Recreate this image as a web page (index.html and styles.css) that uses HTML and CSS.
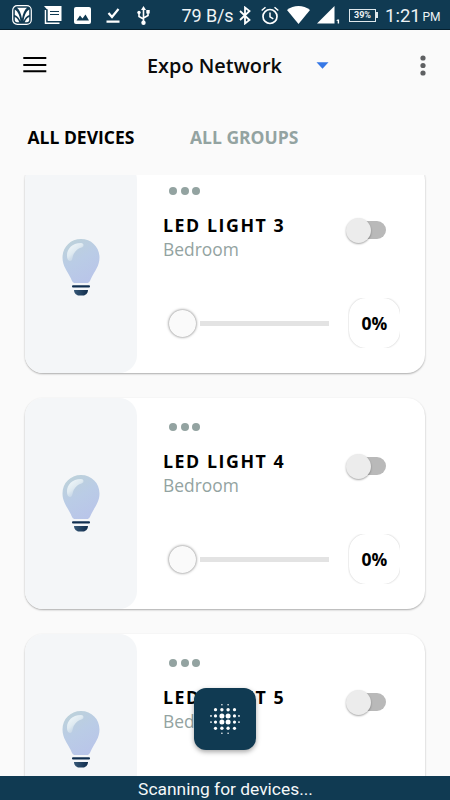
FILE: index.html
```html
<!DOCTYPE html>
<html lang="en">
<head>
<meta charset="utf-8">
<title>Expo Network</title>
<link rel="stylesheet" href="styles.css">
</head>
<body>
<svg class="defs" width="0" height="0">
  <defs>
    <linearGradient id="glass" x1="0.15" y1="0" x2="0.65" y2="1">
      <stop offset="0" stop-color="#bdd2d9"/><stop offset="0.5" stop-color="#bacce6"/><stop offset="1" stop-color="#b9c5e9"/>
    </linearGradient>
    <linearGradient id="shine" x1="0" y1="0" x2="0.8" y2="1">
      <stop offset="0" stop-color="#f4fafb"/><stop offset="0.5" stop-color="#dfeaf1"/><stop offset="1" stop-color="#bed0e3" stop-opacity="0.2"/>
    </linearGradient>
    <linearGradient id="base" x1="0" y1="0" x2="1" y2="0">
      <stop offset="0" stop-color="#375877"/><stop offset="1" stop-color="#102d4d"/>
    </linearGradient>
    <symbol id="bulb" viewBox="0 0 38 57">
      <path fill="url(#glass)" d="M19 0C8.300 0 .5 8.200.5 18.500c0 8.500 4.800 13.500 8.200 20.500 1.300 2.800 1.800 5 4.300 5h12c2.500 0 3-2.200 4.300-5 3.400-7 8.200-12 8.200-20.500C37.500 8.200 29.700 0 19 0Z"/>
      <path fill="url(#shine)" d="M19 4C10 4 5 10 5 16.500c0 3 1 5.500 3 5.500 3 0 2-4 4-7.500C14 11 16.500 9.500 19.500 8.500 22.500 7.500 22 4 19 4Z"/>
      <rect x="10" y="46.300" width="18" height="2.200" rx="1" fill="#102f50"/>
      <path fill="url(#base)" d="M12 51h14c0 3-2.300 5.500-5 5.500h-4c-2.700 0-5-2.500-5-5.500Z"/>
    </symbol>
  </defs>
</svg>
<div class="screen">
  <div class="statusbar">
    <svg class="ic-app" width="20" height="20" viewBox="0 0 20 20"><rect x=".7" y=".7" width="18.600" height="18.600" rx="4.500" fill="none" stroke="#fff" stroke-width="1.200"/><g fill="#fff"><path d="M5 2.700h10c-2.500 2-4 5.500-5 11-1-5.500-2.500-9-5-11Z"/><path d="M2.800 4.500c3.200 2 5 6 5.700 11.500-1.500-3-3-5-5.700-6ZM17.200 4.500c-3.200 2-5 6-5.700 11.500 1.500-3 3-5 5.700-6Z"/><path d="M2.800 12c2 .8 3.500 2.700 4.500 5.200H5c-1.400 0-2.200-.9-2.200-2.200ZM17.200 12c-2 .8-3.500 2.700-4.500 5.200H15c1.400 0 2.200-.9 2.200-2.200Z"/></g></svg>
    <svg class="ic-doc" width="18" height="18" viewBox="0 0 18 18"><path fill="#fff" d="M0 0h17.500v15H3.500V4Z"/><path d="M1.500 4v13.200h14" fill="none" stroke="#fff" stroke-width="1.500"/><path d="M3 3v12.500h12" fill="none" stroke="#103a52" stroke-width=".8"/><path d="M6 5.500h9M6 8.500h9" stroke="#103a52" stroke-width="1"/></svg>
    <svg class="ic-image" width="17" height="17" viewBox="0 0 17 17"><rect width="17" height="17" rx="2" fill="#fff"/><path fill="#103a52" d="m2.500 13.500 3.500-5 2.500 3 3-4 3.500 6Z"/></svg>
    <svg class="ic-check" width="14" height="15" viewBox="0 0 14 15"><path d="m2.500 5 3.500 4L12.500 1M.5 13.700h13" fill="none" stroke="#fff" stroke-width="2.200"/></svg>
    <svg class="ic-usb" width="13" height="19" viewBox="0 0 13 19"><path d="M6.500 3v14M6.500 13 2 10.500V6.500M6.500 12 11 9.500V6" fill="none" stroke="#fff" stroke-width="1.600"/><path fill="#fff" d="m6.500 0 2.500 4H4ZM9.300 4h3.400v3.400H9.300Z"/><circle cx="2" cy="6.500" r="1.700" fill="#fff"/><circle cx="6.500" cy="16.700" r="2.200" fill="#fff"/></svg>
    <span class="speed">79 B/s</span>
    <svg class="ic-bt" width="12" height="19" viewBox="0 0 12 19"><path d="m1 5 9.500 9L6 17.500v-16L10.500 5 1 14" fill="none" stroke="#fff" stroke-width="1.800"/></svg>
    <svg class="ic-alarm" width="18" height="19" viewBox="0 0 18 19"><circle cx="9" cy="10.500" r="7" fill="none" stroke="#fff" stroke-width="1.700"/><path d="M.7 4.500 4.500 1.200M17.300 4.500 13.500 1.200M9 6.500v4.300l3.300 2" fill="none" stroke="#fff" stroke-width="1.500"/></svg>
    <svg class="ic-wifi" width="23" height="18" viewBox="0 0 23 18"><path fill="#fff" d="M0 4C6.500-1.300 16.500-1.300 23 4L11.500 18Z"/></svg>
    <svg class="ic-signal" width="23" height="19" viewBox="0 0 23 19"><path fill="#fff" d="M17.500 0v17.500H0ZM20.700 13.500h1.400v4h-1.400v-2.700l-1 .3v-1Z"/></svg>
    <span class="battery">39%</span>
    <span class="clock">1:21</span><span class="ampm">PM</span>
  </div>

  <div class="appbar">
    <svg class="menu" width="24" height="18" viewBox="0 0 24 18"><path d="M.3 2h23M.3 9h23M.3 15.200h23" stroke="#000" stroke-width="2"/></svg>
    <span class="network">Expo Network</span>
    <svg class="caret" width="13" height="7" viewBox="0 0 13 7"><path fill="#3577e6" d="M.5.300h12L6.500 6.800Z"/></svg>
    <svg class="more" width="6" height="21" viewBox="0 0 6 21"><g fill="#5e6062"><circle cx="3" cy="3" r="2.600"/><circle cx="3" cy="10.500" r="2.600"/><circle cx="3" cy="18" r="2.600"/></g></svg>
  </div>

  <div class="tabs"><span class="tab active">ALL DEVICES</span><span class="tab">ALL GROUPS</span></div>

  <div class="list">
    <div class="card first">
      <div class="thumb"><svg width="38" height="57"><use href="#bulb"/></svg></div>
      <div class="body">
        <div class="dots"><i></i><i></i><i></i></div>
        <div class="row"><div class="names"><div class="title">LED LIGHT 3</div><div class="room">Bedroom</div></div><div class="toggle"><i></i></div></div>
        <div class="row dim"><div class="knob"></div><div class="track"></div><div class="value"><span>0%</span></div></div>
      </div>
    </div>
    <div class="card">
      <div class="thumb"><svg width="38" height="57"><use href="#bulb"/></svg></div>
      <div class="body">
        <div class="dots"><i></i><i></i><i></i></div>
        <div class="row"><div class="names"><div class="title">LED LIGHT 4</div><div class="room">Bedroom</div></div><div class="toggle"><i></i></div></div>
        <div class="row dim"><div class="knob"></div><div class="track"></div><div class="value"><span>0%</span></div></div>
      </div>
    </div>
    <div class="card">
      <div class="thumb"><svg width="38" height="57"><use href="#bulb"/></svg></div>
      <div class="body">
        <div class="dots"><i></i><i></i><i></i></div>
        <div class="row"><div class="names"><div class="title">LED LIGHT 5</div><div class="room">Bedroom</div></div><div class="toggle"><i></i></div></div>
      </div>
    </div>
  </div>

  <div class="fab">
    <svg width="32" height="32" viewBox="0 0 32 32"><g fill="#fff">
      <circle cx="12.900" cy="1.800" r=".8"/><circle cx="19.100" cy="1.800" r=".8"/>
      <circle cx="6.500" cy="6.700" r="1.600"/><circle cx="12.900" cy="6.700" r="1.700"/><circle cx="19.100" cy="6.700" r="1.700"/><circle cx="25.500" cy="6.700" r="1.600"/>
      <circle cx="2" cy="12.900" r=".9"/><circle cx="6.500" cy="12.900" r="1.600"/><circle cx="12.900" cy="12.900" r="2.500"/><circle cx="19.100" cy="12.900" r="2.500"/><circle cx="25.500" cy="12.900" r="1.600"/><circle cx="30" cy="12.900" r=".9"/>
      <circle cx="2" cy="19.100" r=".9"/><circle cx="6.500" cy="19.100" r="1.600"/><circle cx="12.900" cy="19.100" r="2.500"/><circle cx="19.100" cy="19.100" r="2.500"/><circle cx="25.500" cy="19.100" r="1.600"/><circle cx="30" cy="19.100" r=".9"/>
      <circle cx="6.500" cy="25.300" r="1.600"/><circle cx="12.900" cy="25.300" r="1.700"/><circle cx="19.100" cy="25.300" r="1.700"/><circle cx="25.500" cy="25.300" r="1.600"/>
      <circle cx="12.900" cy="30.200" r=".8"/><circle cx="19.100" cy="30.200" r=".8"/>
    </g></svg>
  </div>
  <div class="snackbar">Scanning for devices...</div>
</div>
</body>
</html>
```
FILE: styles.css
```css
* { box-sizing: border-box; }
body { margin: 0; background: #fafafa; font-family: "Open Sans", "Noto Sans", sans-serif; }
.defs { position: absolute; }
.screen { position: relative; width: 450px; height: 800px; overflow: hidden; display: flex; flex-direction: column; background: #fafafa; }
svg { display: block; flex: none; }

.statusbar { flex: none; height: 30px; background: #103a52; border-bottom: 1px solid #05202f; display: flex; align-items: center; padding: 1px 0 0 12px; color: #eef3f5; font-family: Roboto, sans-serif; white-space: nowrap; }
.ic-doc { margin-left: 12px; }
.ic-image { margin-left: 12px; }
.ic-check { margin-left: 14.500px; }
.ic-usb { margin-left: 17px; }
.speed { margin-left: 32px; width: 57.500px; font-size: 18px; line-height: 28px; padding-top: 1px; letter-spacing: -.1px; }
.ic-alarm { margin-left: 10px; }
.ic-wifi { margin-left: 8px; }
.ic-signal { margin-left: 7px; }
.battery { position: relative; margin-left: 9px; width: 27px; height: 13px; border: 1.500px solid #dfe8ec; text-align: center; font-size: 9px; line-height: 11px; font-weight: 700; }
.battery::after { content: ""; position: absolute; right: -3px; top: 2px; width: 2px; height: 6px; background: #dfe8ec; }
.clock { margin-left: 9px; width: 37.500px; font-size: 18.500px; line-height: 28px; padding-top: 1px; }
.ampm { font-size: 12px; line-height: 20px; padding-top: 4px; }

.appbar { flex: none; height: 70px; display: flex; align-items: center; padding: 0 24.500px 0 23px; }
.network { margin-left: 100px; width: 135px; font-size: 19.900px; font-weight: 600; color: #0b0b0b; white-space: nowrap; }
.caret { margin-left: 34px; margin-top: 1px; }
.more { margin-left: auto; }

.tabs { flex: none; height: 75px; display: flex; align-items: center; padding: 0 0 1px 27.500px; font-size: 17.500px; font-weight: 700; white-space: nowrap; }
.tab { width: 162.500px; color: #93a3a1; }
.tab.active { color: #000; }

.list { flex: 1; overflow: hidden; padding: 0 25px; display: flex; flex-direction: column; gap: 25px; }
.card { flex: none; height: 211px; display: flex; background: #fff; border-radius: 18px; box-shadow: 0 1px 2px rgba(0,0,0,.32); }
.card.first { margin-top: -13px; }
.thumb { width: 112px; background: #f4f6f8; border-radius: 18px; display: flex; justify-content: center; padding-top: 77px; }
.body { flex: 1; padding: 25px 25px 0 26px; }
.dots { display: flex; gap: 3.300px; padding-left: 6.300px; height: 8px; }
.dots i { width: 8px; height: 8px; border-radius: 50%; background: #93a3a1; }
.row { display: flex; }
.names { width: 183px; padding-top: 18px; height: 78px; white-space: nowrap; }
.title { font-size: 17.800px; line-height: 24px; font-weight: 700; letter-spacing: 1.550px; color: #000; }
.room { font-size: 17.400px; line-height: 25px; color: #93a3a1; }
.toggle { width: 40px; height: 26px; margin-top: 22px; display: flex; align-items: center; }
.toggle::after { content: ""; width: 28px; height: 18px; margin-left: -13px; border-radius: 0 9px 9px 0; background: #b9b9b9; }
.toggle i { position: relative; width: 25px; height: 25px; border-radius: 50%; background: #ececec; box-shadow: 0 1px 2px rgba(0,0,0,.35); }
.dim { align-items: center; height: 100px; }
.knob { width: 27px; height: 27px; margin-left: 6px; border-radius: 50%; background: #fafafa; box-shadow: 0 0 3px rgba(0,0,0,.6); }
.track { width: 129px; height: 5px; margin-left: 4px; background: #e3e3e3; }
.value { width: 52px; height: 50px; margin-left: 19px; overflow: hidden; }
.value span { display: block; margin: 0 .500px; padding-left: 1px; height: 50px; line-height: 51px; border-radius: 17px; text-align: center; font-size: 17.500px; font-weight: 700; color: #000; box-shadow: 0 0 2px rgba(0,0,0,.25); }

.fab { position: absolute; left: 194px; top: 688px; width: 62px; height: 62px; border-radius: 12px; background: #103a52; box-shadow: 0 2px 5px rgba(0,0,0,.35); display: flex; align-items: center; justify-content: center; }
.snackbar { flex: none; height: 24px; background: #103a52; color: #f5f8f9; text-align: center; font: 17.400px/26px Roboto, sans-serif; padding-left: 1px; }
```
